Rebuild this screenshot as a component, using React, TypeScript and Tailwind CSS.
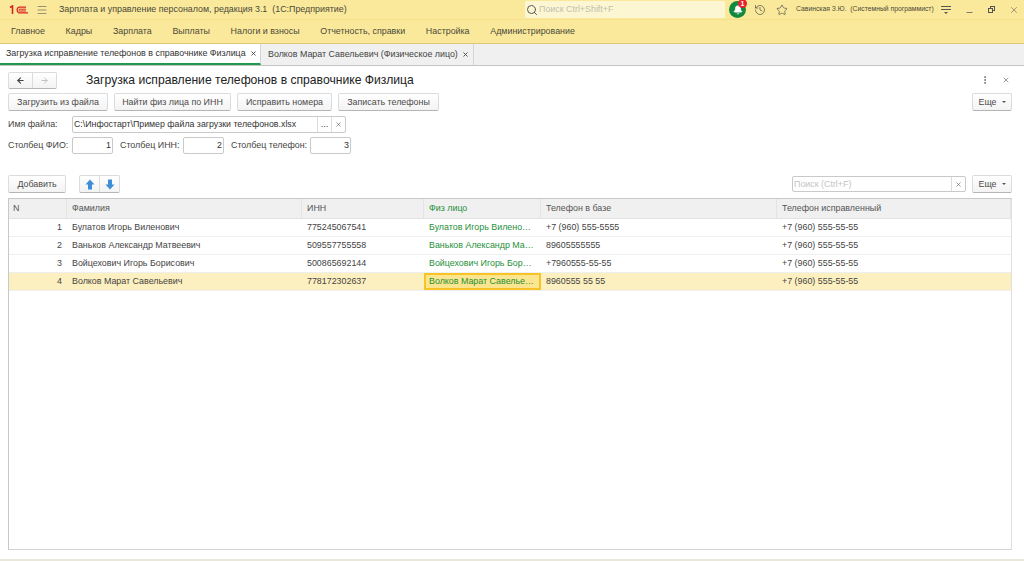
import React from 'react';
import { X, History, Star, Bell, Search, Minus, Menu, ArrowLeft, ArrowRight, EllipsisVertical } from 'lucide-react';

const cols = 'grid grid-cols-[58px_235px_122px_117px_236px_1fr]';

const rows = [
  ['1', 'Булатов Игорь Виленович', '775245067541', 'Булатов Игорь Вилено…', '+7 (960) 555-5555', '+7 (960) 555-55-55'],
  ['2', 'Ваньков Александр Матвеевич', '509557755558', 'Ваньков Александр Ма…', '89605555555', '+7 (960) 555-55-55'],
  ['3', 'Войцехович Игорь Борисович', '500865692144', 'Войцехович Игорь Бор…', '+7960555-55-55', '+7 (960) 555-55-55'],
  ['4', 'Волков Марат Савельевич', '778172302637', 'Волков Марат Савелье…', '8960555 55 55', '+7 (960) 555-55-55'],
];

function Btn({ children, className = '' }: { children: React.ReactNode; className?: string }) {
  return (
    <div className={`h-[18px] flex items-center justify-center bg-gradient-to-b from-white to-[#f3f3f3] border border-[#dcdcdc] border-b-[#b5b5b5] rounded-[2px] text-[#4b4b4b] ${className}`}>
      {children}
    </div>
  );
}

function Field({ value, className = '' }: { value: string; className?: string }) {
  return (
    <div className={`h-[17px] flex items-center justify-end pr-[1px] border border-[#c9c9c9] rounded-[2px] bg-white text-[#333] ${className}`}>
      {value}
    </div>
  );
}

function More() {
  return (
    <Btn className="w-[40px] gap-[5px]">
      <span>Еще</span>
      <span className="w-0 h-0 border-x-[2px] border-x-transparent border-t-[2px] border-t-[#555]" />
    </Btn>
  );
}

function BlockArrow({ down = false }: { down?: boolean }) {
  return (
    <svg width="10" height="11" viewBox="0 0 10 11" className={down ? 'rotate-180' : ''}>
      <path d="M5 0.5 L9.5 5.5 H7 V10.5 H3 V5.5 H0.5 Z" fill="#3f8fd8" />
    </svg>
  );
}

export default function App() {
  return (
    <div className="w-[1024px] h-[561px] overflow-hidden flex flex-col bg-white text-[8.9px] leading-none text-[#444]" style={{ fontFamily: '"Liberation Sans", Arial, sans-serif' }}>
      {/* title bar */}
      <div className="h-[19px] shrink-0 flex items-center bg-[#fbe99b] pl-[9px]">
        <svg width="20" height="10" viewBox="0 0 20 10" className="shrink-0">
          <path d="M1 2.5 L3.5 1 V9" fill="none" stroke="#d8231f" strokeWidth="1.6" />
          <path d="M17 2.2 H10 a3 3 0 0 0 0 5.6 H19" fill="none" stroke="#d8231f" strokeWidth="1.3" />
          <path d="M17 4.2 H10.5 a1 1 0 0 0 0 1.8 H17" fill="none" stroke="#d8231f" strokeWidth="1" />
        </svg>
        <Menu size={12} strokeWidth={1.2} className="ml-[7px] text-[#555] shrink-0" />
        <span className="ml-[11px] w-[466px] shrink-0 text-[#4a4a3a] whitespace-pre">Зарплата и управление персоналом, редакция 3.1  (1С:Предприятие)</span>
        <div className="w-[200px] h-[17px] shrink-0 flex items-center gap-[1px] bg-[#fdf6d2] pl-[1px] text-[#c2bfae] rounded-[1px]">
          <Search size={12} className="text-[#555] shrink-0" />
          <span>Поиск Ctrl+Shift+F</span>
        </div>
        <div className="relative ml-[4px] w-[17px] h-[17px] rounded-full bg-[#12893f] flex items-center justify-center shrink-0">
          <Bell size={10} className="text-white fill-white" />
          <div className="absolute -top-[2px] right-[-1px] w-[9px] h-[9px] rounded-full bg-[#e8202a] text-white text-[7px] font-bold flex items-center justify-center">1</div>
        </div>
        <History size={12} strokeWidth={1.3} className="ml-[8px] text-[#444] shrink-0" />
        <Star size={12} strokeWidth={1.3} className="ml-[10px] text-[#444] shrink-0" />
        <span className="ml-[8px] w-[137px] shrink-0 text-[6.8px] whitespace-pre text-[#4a4a3a]">Савинская З.Ю.  (Системный программист)</span>
        <div className="ml-[8px] w-[10px] flex flex-col items-center gap-[2px] shrink-0">
          <div className="w-[10px] h-px bg-[#555]" />
          <div className="w-[10px] h-px bg-[#555]" />
          <div className="w-0 h-0 border-x-[2px] border-x-transparent border-t-[2px] border-t-[#555]" />
        </div>
        <Minus size={9} className="ml-[14px] mt-[5px] text-[#555] shrink-0" />
        <div className="relative ml-[14px] w-[7px] h-[7px] shrink-0">
          <div className="absolute right-0 top-0 w-[5px] h-[5px] border border-[#555]" />
          <div className="absolute left-0 bottom-0 w-[5px] h-[5px] border border-[#555] bg-[#fbe99b]" />
        </div>
        <X size={10} strokeWidth={1.3} className="ml-[14px] text-[#555] shrink-0" />
      </div>

      {/* main menu */}
      <div className="h-[25px] shrink-0 flex items-center gap-[20.7px] pl-[11px] bg-[#fbe99b] border-t border-t-[#f6e08c] border-b border-b-[#dcc97e] text-[#4a4a3a]">
        {['Главное', 'Кадры', 'Зарплата', 'Выплаты', 'Налоги и взносы', 'Отчетность, справки', 'Настройка', 'Администрирование'].map(item => (
          <span key={item}>{item}</span>
        ))}
      </div>

      {/* open tabs */}
      <div className="h-[22px] shrink-0 flex bg-[#f0f0f0] border-b border-b-[#c4c4c4]">
        <div className="w-[261px] shrink-0 flex items-center gap-[4px] pl-[6px] bg-white border-b-2 border-b-[#1f9a4c] border-r border-r-[#d5d5d5] text-[#333]">
          <span className="whitespace-nowrap">Загрузка исправление телефонов в справочнике Физлица</span>
          <X size={7} strokeWidth={3} className="text-[#444] shrink-0" />
        </div>
        <div className="w-[213px] shrink-0 flex items-center gap-[4px] pl-[7px] border-r border-r-[#d5d5d5] text-[#444]">
          <span className="whitespace-nowrap">Волков Марат Савельевич (Физическое лицо)</span>
          <X size={7} strokeWidth={3} className="text-[#444] shrink-0" />
        </div>
      </div>

      {/* form */}
      <div className="flex-1 flex flex-col pl-[8px] pr-[12px] min-h-0">
        <div className="h-[18px] mt-[5px] flex items-center">
          <div className="w-[49px] h-[17px] flex bg-gradient-to-b from-white to-[#f3f3f3] border border-[#dcdcdc] border-b-[#b5b5b5] rounded-[2px]">
            <div className="w-[24px] flex items-center justify-center border-r border-r-[#dcdcdc]"><ArrowLeft size={9} strokeWidth={3} className="text-[#444]" /></div>
            <div className="flex-1 flex items-center justify-center"><ArrowRight size={9} strokeWidth={2.5} className="text-[#bdbdbd]" /></div>
          </div>
          <span className="ml-[29px] text-[12.15px] text-[#222] whitespace-nowrap">Загрузка исправление телефонов в справочнике Физлица</span>
          <EllipsisVertical size={10} strokeWidth={2.4} className="ml-auto text-[#666]" />
          <X size={8} strokeWidth={2} className="ml-[12px] mr-[2px] text-[#666]" />
        </div>

        <div className="flex items-center gap-[6px] mt-[4px]">
          <Btn className="w-[100px]">Загрузить из файла</Btn>
          <Btn className="w-[117px]">Найти физ лица по ИНН</Btn>
          <Btn className="w-[95px]">Исправить номера</Btn>
          <Btn className="w-[101px]">Записать телефоны</Btn>
          <div className="ml-auto"><More /></div>
        </div>

        <div className="flex items-center mt-[5px] h-[17px]">
          <span className="w-[64px]">Имя файла:</span>
          <div className="w-[274px] h-[17px] flex items-stretch border border-[#c9c9c9] rounded-[2px] text-[#333]">
            <span className="flex-1 flex items-center pl-[1px] whitespace-nowrap text-[8.8px]">C:\Инфостарт\Пример файла загрузки телефонов.xlsx</span>
            <span className="w-[14px] flex items-center justify-center border-l border-l-[#dcdcdc]">...</span>
            <span className="w-[14px] flex items-center justify-center border-l border-l-[#dcdcdc]"><X size={7} strokeWidth={2} className="text-[#555]" /></span>
          </div>
        </div>

        <div className="flex items-center mt-[4px] h-[17px] whitespace-nowrap">
          <span className="w-[64px]">Столбец ФИО:</span>
          <Field value="1" className="w-[41px]" />
          <span className="ml-[7px] w-[63px]">Столбец ИНН:</span>
          <Field value="2" className="w-[41px]" />
          <span className="ml-[7px] w-[79px]">Столбец телефон:</span>
          <Field value="3" className="w-[41px]" />
        </div>

        <div className="flex items-center mt-[21px]">
          <Btn className="w-[58px]">Добавить</Btn>
          <div className="ml-[13px] w-[41px] h-[18px] flex bg-gradient-to-b from-white to-[#f3f3f3] border border-[#dcdcdc] border-b-[#b5b5b5] rounded-[2px]">
            <div className="w-[20px] flex items-center justify-center border-r border-r-[#dcdcdc]"><BlockArrow /></div>
            <div className="flex-1 flex items-center justify-center"><BlockArrow down /></div>
          </div>
          <div className="ml-auto w-[174px] h-[16px] flex items-stretch border border-[#c9c9c9] rounded-[2px]">
            <span className="flex-1 flex items-center pl-[1px] text-[#c4c4c4]">Поиск (Ctrl+F)</span>
            <span className="w-[14px] flex items-center justify-center border-l border-l-[#dcdcdc]"><X size={7} strokeWidth={2} className="text-[#555]" /></span>
          </div>
          <div className="ml-[6px]"><More /></div>
        </div>

        {/* table */}
        <div className="mt-[5px] flex-1 mb-[9px] min-h-0 border border-[#c8c8c8] border-r-[#e0e0e0] border-b-[#d4d4d4]">
          <div className={`${cols} h-[20px] bg-[#f0f0f0] border-b border-b-[#e2e2e2]`}>
            {['N', 'Фамилия', 'ИНН', 'Физ лицо', 'Телефон в базе', 'Телефон исправленный'].map((h, i) => (
              <div key={h} className={`flex items-center ${i === 0 ? 'pl-[4px]' : 'pl-[5px]'} border-r border-r-[#e4e4e4] ${i === 3 ? 'text-[#1f8f3a]' : 'text-[#555]'}`}>{h}</div>
            ))}
          </div>
          {rows.map((r, ri) => {
            const current = ri === 3;
            return (
              <div key={r[0]} className={`${cols} h-[18px] border-b border-b-[#efefef] ${current ? 'bg-[#fdf0c0]' : 'bg-white'}`}>
                {r.map((c, i) => {
                  const focused = current && i === 3;
                  return (
                    <div
                      key={i}
                      className={`flex items-center whitespace-nowrap ${i === 0 ? 'justify-end pr-[5px]' : focused ? 'pl-[3px]' : 'pl-[5px]'} ${i === 3 ? 'text-[#1f8f3a]' : 'text-[#444]'} ${focused ? 'bg-[#fbe58e] border-2 border-[#f7c325]' : ''}`}
                    >
                      {c}
                    </div>
                  );
                })}
              </div>
            );
          })}
        </div>
      </div>
      <div className="h-[2px] shrink-0 bg-[#e9e6da]" />
    </div>
  );
}
